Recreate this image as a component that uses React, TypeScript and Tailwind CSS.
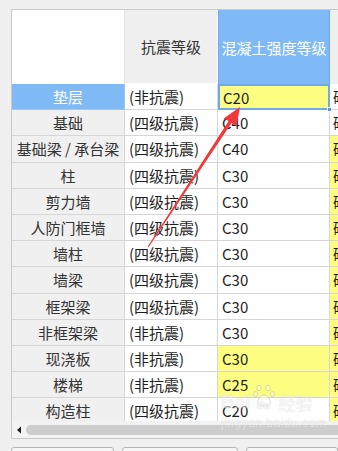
import React from "react";

type Row = {
  name: string;
  level: string;
  grade: string;
  gradeYellow?: boolean;
  nextYellow?: boolean;
  selected?: boolean;
};

const rows: Row[] = [
  { name: "垫层", level: "(非抗震)", grade: "C20", gradeYellow: true, selected: true },
  { name: "基础", level: "(四级抗震)", grade: "C40" },
  { name: "基础梁 / 承台梁", level: "(四级抗震)", grade: "C40", nextYellow: true },
  { name: "柱", level: "(四级抗震)", grade: "C30", nextYellow: true },
  { name: "剪力墙", level: "(四级抗震)", grade: "C30", nextYellow: true },
  { name: "人防门框墙", level: "(四级抗震)", grade: "C30", nextYellow: true },
  { name: "墙柱", level: "(四级抗震)", grade: "C30", nextYellow: true },
  { name: "墙梁", level: "(四级抗震)", grade: "C30", nextYellow: true },
  { name: "框架梁", level: "(四级抗震)", grade: "C30", nextYellow: true },
  { name: "非框架梁", level: "(非抗震)", grade: "C30", nextYellow: true },
  { name: "现浇板", level: "(非抗震)", grade: "C30", gradeYellow: true, nextYellow: true },
  { name: "楼梯", level: "(非抗震)", grade: "C25", gradeYellow: true, nextYellow: true },
  { name: "构造柱", level: "(四级抗震)", grade: "C20", nextYellow: true },
];

const font = { fontFamily: '"Noto Sans CJK SC", "Noto Sans", sans-serif' };

function DataRow({ r }: { r: Row }) {
  return (
    <div className="grid grid-cols-[113px_93px_112px_80px] h-[26.2px] shrink-0">
      <div
        className={
          r.selected
            ? "flex items-center justify-center border-r border-b border-[#9cc8f5] bg-[#7fbaf6] text-white"
            : "flex items-center justify-center border-r border-b border-[#d6d6d6] bg-[#f0f0f0] text-[#333]"
        }
      >
        {r.name}
      </div>
      <div className="flex items-center pl-[4px] border-r border-b border-[#d6d6d6] bg-white text-[#1e1e1e]">
        {r.level}
      </div>
      <div
        className={
          r.selected
            ? "relative flex items-center pl-[3px] border-2 border-[#6ea9ec] bg-[#fdfd82] text-[#1e1e1e]"
            : r.gradeYellow
            ? "flex items-center pl-[4px] border-r border-b border-[#d6d6d6] bg-[#fdfd82] text-[#1e1e1e]"
            : "flex items-center pl-[4px] border-r border-b border-[#d6d6d6] bg-white text-[#1e1e1e]"
        }
      >
        {r.grade}
        {r.selected && (
          <span className="absolute right-[-4px] bottom-[-4px] w-[5px] h-[5px] bg-[#4f93e6] border border-white" />
        )}
      </div>
      <div
        className={
          r.nextYellow
            ? "flex items-center pl-[3px] border-b border-[#d6d6d6] bg-[#fdfd82] text-[#1e1e1e]"
            : "flex items-center pl-[3px] border-b border-[#d6d6d6] bg-white text-[#1e1e1e]"
        }
      >
        砼
      </div>
    </div>
  );
}

export default function App() {
  return (
    <div
      className="relative w-[338px] h-[451px] overflow-hidden bg-[#f0f0f0] text-[15px] leading-none"
      style={font}
    >
      <div className="pt-[9px] pl-[11px]">
        {/* table frame */}
        <div className="w-[420px] border border-[#c9c9c9] bg-white flex flex-col">
          {/* header row */}
          <div className="grid grid-cols-[113px_93px_112px_80px] h-[74px]">
            <div className="bg-white border-r border-[#e4e4e4]" />
            <div className="flex items-center justify-center bg-[#efefef] border-r border-b border-white text-[#333]">
              抗震等级
            </div>
            <div className="flex items-center justify-center bg-[#7fbaf6] border-x border-[#6ea9ec] text-white">
              混凝土强度等级
            </div>
            <div className="bg-[#efefef]" />
          </div>

          {/* body */}
          <div className="h-[337px] overflow-hidden flex flex-col">
            {rows.map((r) => (
              <DataRow key={r.name} r={r} />
            ))}
          </div>

          {/* horizontal scrollbar */}
          <div className="h-[17px] bg-[#f3f3f3] flex items-center">
            <svg width="12" height="10" viewBox="0 0 12 10" className="ml-[2px]">
              <polygon points="3,5 7,1.5 7,8.5" fill="#1a1a1a" />
            </svg>
            <div className="h-[10px] flex-1 rounded-full bg-[#cdcdcd]" />
          </div>
        </div>

        {/* button row */}
        <div className="flex gap-[8px] mt-[8px]">
          <div className="w-[112px] h-[20px] rounded-[3px] border border-[#b4b4b4] bg-[#f7f7f7]" />
          <div className="w-[127px] h-[20px] rounded-[3px] border border-[#b4b4b4] bg-[#f7f7f7]" />
          <div className="w-[100px] h-[20px] rounded-[3px] border border-[#b4b4b4] bg-[#f7f7f7]" />
        </div>
      </div>

      {/* watermark */}
      <div className="absolute left-[221px] top-[389px] flex flex-col items-start pointer-events-none opacity-60">
        <div className="flex items-end gap-[2px]">
          <span className="text-[19px] font-bold text-white/80 [text-shadow:0_0_1px_#b0b0b0]" style={{ fontFamily: '"Liberation Sans", sans-serif' }}>
            Bai
          </span>
          <span className="relative flex items-center justify-center w-[22px] h-[22px]">
            <svg width="22" height="24" viewBox="0 0 22 24" className="absolute left-0 top-[-6px]">
              <g fill="rgba(255,255,255,0.7)" stroke="#b4b4b4" strokeWidth="0.8">
                <ellipse cx="6" cy="5" rx="2.2" ry="2.8" />
                <ellipse cx="15" cy="5" rx="2.2" ry="2.8" />
                <ellipse cx="2.5" cy="11" rx="2" ry="2.5" />
                <ellipse cx="19.5" cy="11" rx="2" ry="2.5" />
                <path d="M5 21 C4 16 8 12 11 12 C14 12 18 16 17 21 C16 23 6 23 5 21 Z" />
              </g>
            </svg>
            <span className="relative text-[11px] font-bold text-white/80 mt-[10px] [text-shadow:0_0_1px_#a0a0a0]" style={{ fontFamily: '"Liberation Sans", sans-serif' }}>
              du
            </span>
          </span>
          <span className="text-[17px] text-white/80 [text-shadow:0_0_1px_#b0b0b0] ml-[2px]">经验</span>
        </div>
        <span className="mt-[6px] text-[12px] tracking-[0.5px] text-white/80 [text-shadow:0_0_1px_#b0b0b0]" style={{ fontFamily: '"Liberation Sans", sans-serif' }}>
          jingyan.baidu.com
        </span>
      </div>

      {/* red annotation arrow */}
      <svg className="absolute left-0 top-0 pointer-events-none" width="338" height="451" viewBox="0 0 338 451">
        <polygon
          points="147.6,246.7 228.6,121.0 223.6,118.6 240,107 236.6,126.2 231.6,123.0 148.6,247.3"
          fill="#f2393a"
        />
      </svg>
    </div>
  );
}
